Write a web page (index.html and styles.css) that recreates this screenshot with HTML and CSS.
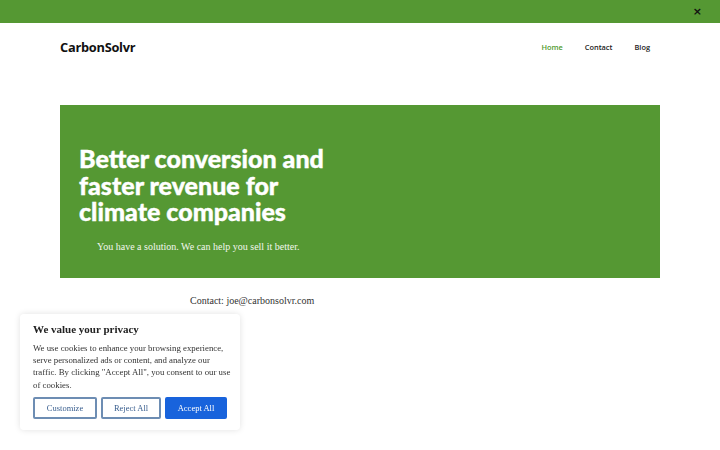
FILE: index.html
```html
<!DOCTYPE html>
<html lang="en">
<head>
<meta charset="utf-8">
<title>CarbonSolvr</title>
<link rel="stylesheet" href="styles.css">
</head>
<body>
<div class="topbar">
  <button class="topbar-close" aria-label="Close">&#215;</button>
</div>
<header class="site-header">
  <div class="container header-inner">
    <a class="logo" href="#">CarbonSolvr</a>
    <nav class="nav">
      <a class="nav-link active" href="#">Home</a>
      <a class="nav-link" href="#">Contact</a>
      <a class="nav-link" href="#">Blog</a>
    </nav>
  </div>
</header>
<main class="container">
  <section class="hero">
    <h1 class="hero-title">Better conversion and faster revenue for climate companies</h1>
    <p class="hero-sub">You have a solution. We can help you sell it better.</p>
  </section>
  <p class="contact">Contact: joe@carbonsolvr.com</p>
</main>
<div class="cookie">
  <h2 class="cookie-title">We value your privacy</h2>
  <p class="cookie-text">We use cookies to enhance your browsing experience, serve personalized ads or content, and analyze our traffic. By clicking "Accept All", you consent to our use of cookies.</p>
  <div class="cookie-actions">
    <button class="btn btn-outline btn-custom">Customize</button>
    <button class="btn btn-outline btn-reject">Reject All</button>
    <button class="btn btn-primary btn-accept">Accept All</button>
  </div>
</div>
</body>
</html>
```
FILE: styles.css
```css
* { box-sizing: border-box; }
html, body { margin: 0; padding: 0; }
body {
  background: #fff;
  font-family: "Liberation Serif", "DejaVu Serif", serif;
  color: #333;
}
.topbar {
  height: 23px;
  background: #559833;
  display: flex;
  justify-content: flex-end;
  align-items: center;
  padding-right: 18px;
}
.topbar-close {
  border: 0;
  background: none;
  font-family: "DejaVu Sans", sans-serif;
  font-weight: bold;
  font-size: 11px;
  color: #111;
  padding: 0;
  line-height: 1;
  cursor: pointer;
}
.container {
  width: 600px;
  margin: 0 auto;
}
.header-inner {
  height: 48px;
  display: flex;
  align-items: center;
  justify-content: space-between;
}
.logo {
  font-family: "Open Sans", sans-serif;
  font-weight: 700;
  font-size: 12.8px;
  color: #111;
  text-decoration: none;
  letter-spacing: -0.25px;
}
.nav {
  display: flex;
  gap: 22px;
  padding-right: 10px;
}
.nav-link {
  font-family: "Open Sans", sans-serif;
  font-weight: 600;
  font-size: 7.4px;
  color: #222;
  text-decoration: none;
}
.nav-link.active { color: #4f9a2e; }
.hero {
  margin-top: 34px;
  background: #559833;
  height: 173px;
  padding: 40px 19px 0;
}
.hero-title {
  margin: 0;
  width: 270px;
  font-family: "Lato", sans-serif;
  font-weight: 900;
  font-size: 25px;
  line-height: 26.5px;
  color: #fff;
  -webkit-text-stroke: 0.4px #fff;
}
.hero-sub {
  margin: 16px 0 0 18px;
  font-size: 10px;
  color: #f2f7ee;
}
.contact {
  margin: 17px 0 0 130px;
  font-size: 10px;
  color: #333;
}
.cookie {
  position: fixed;
  left: 20px;
  bottom: 20px;
  width: 220px;
  background: #fff;
  border-radius: 4px;
  box-shadow: 0 0 6px rgba(0,0,0,0.12);
  padding: 9px 8px 11px 13px;
}
.cookie-title {
  margin: 0;
  font-size: 11px;
  font-weight: 700;
  color: #222;
}
.cookie-text {
  margin: 7px 0 0;
  font-size: 8.8px;
  line-height: 12.3px;
  color: #333;
}
.cookie-actions {
  display: flex;
  gap: 4px;
  margin-top: 6px;
}
.btn {
  height: 22px;
  font-family: "Liberation Serif", serif;
  font-size: 8.5px;
  border-radius: 2px;
  padding: 0;
  cursor: pointer;
}
.btn-outline {
  background: #fff;
  border: 2px solid #6d8db3;
  color: #3a5f8f;
}
.btn-custom { width: 64px; }
.btn-reject { width: 60px; }
.btn-primary {
  width: 62px;
  background: #1863dc;
  border: 2px solid #1863dc;
  color: #fff;
}
```
